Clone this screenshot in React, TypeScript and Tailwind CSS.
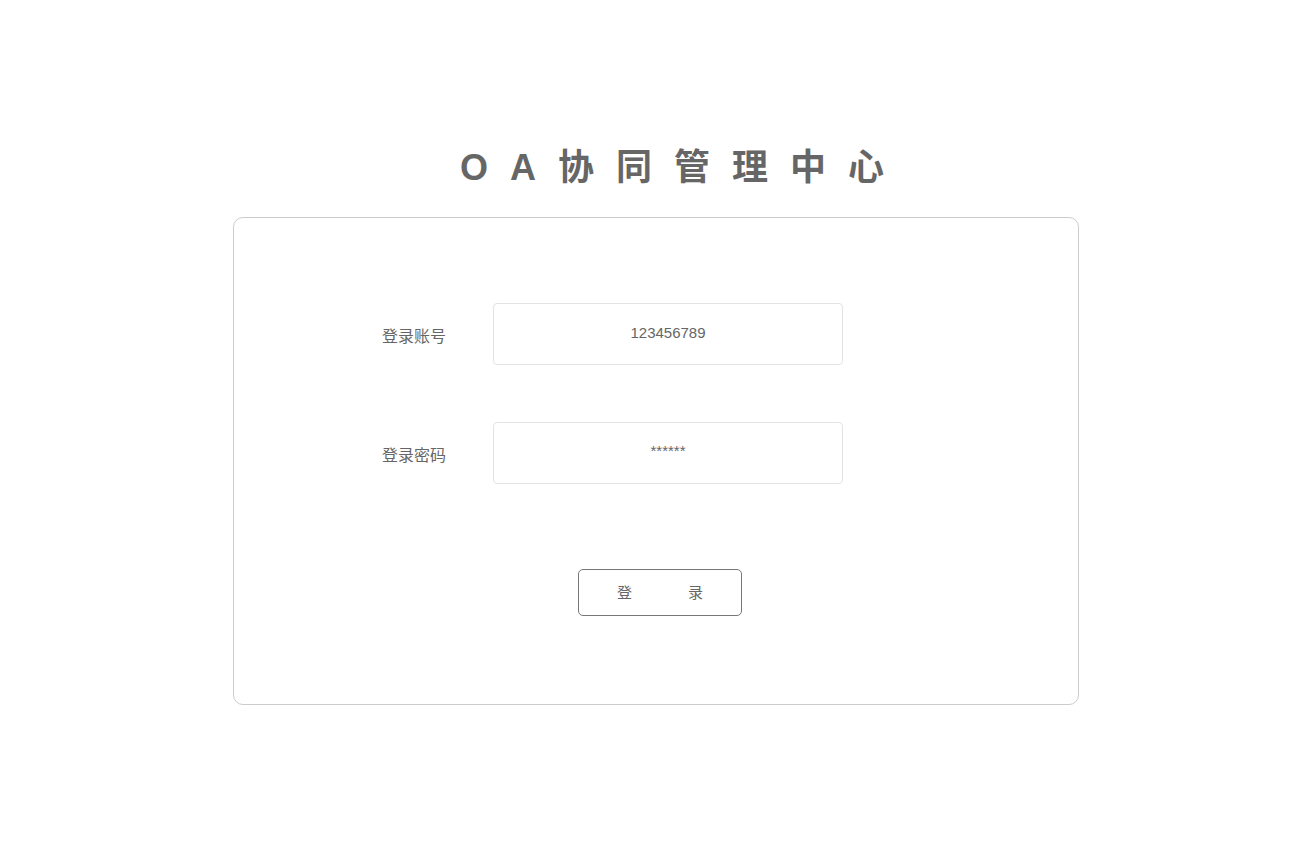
import React from "react";

export default function App() {
  const font = { fontFamily: '"Liberation Sans", Arial, "Noto Sans CJK SC", sans-serif' };
  return (
    <div className="w-[1296px] h-[862px] bg-white overflow-hidden" style={font}>
      <div className="pt-[143px] pl-[460px] h-[217px]">
        <h1 className="text-[36px] leading-[50px] font-bold text-[#666666] tracking-[22px] whitespace-nowrap">
          OA协同管理中心
        </h1>
      </div>
      <div className="ml-[233px] w-[846px] h-[488px] border border-[#cccccc] rounded-[10px] bg-white">
        <div className="pt-[85px] pl-[148px] flex flex-col gap-[57px]">
          <div className="flex items-center">
            <span className="w-[111px] pt-[6px] text-[16px] text-[#666666]">登录账号</span>
            <div className="w-[350px] h-[62px] border border-[#e3e3e3] rounded-[4px] flex items-center justify-center text-[15px] text-[#666666] pb-[1px]">
              123456789
            </div>
          </div>
          <div className="flex items-center">
            <span className="w-[111px] pt-[6px] text-[16px] text-[#666666]">登录密码</span>
            <div className="w-[350px] h-[62px] border border-[#e3e3e3] rounded-[4px] flex items-center justify-center text-[15px] text-[#666666] pb-[3px]">
              ******
            </div>
          </div>
        </div>
        <div className="pt-[85px] pl-[344px]">
          <button className="w-[164px] h-[47px] border border-[#777777] rounded-[5px] flex items-center pl-[38px] gap-[56px] text-[15px] text-[#666666] bg-white pt-[2px]">
            <span>登</span>
            <span>录</span>
          </button>
        </div>
      </div>
    </div>
  );
}
